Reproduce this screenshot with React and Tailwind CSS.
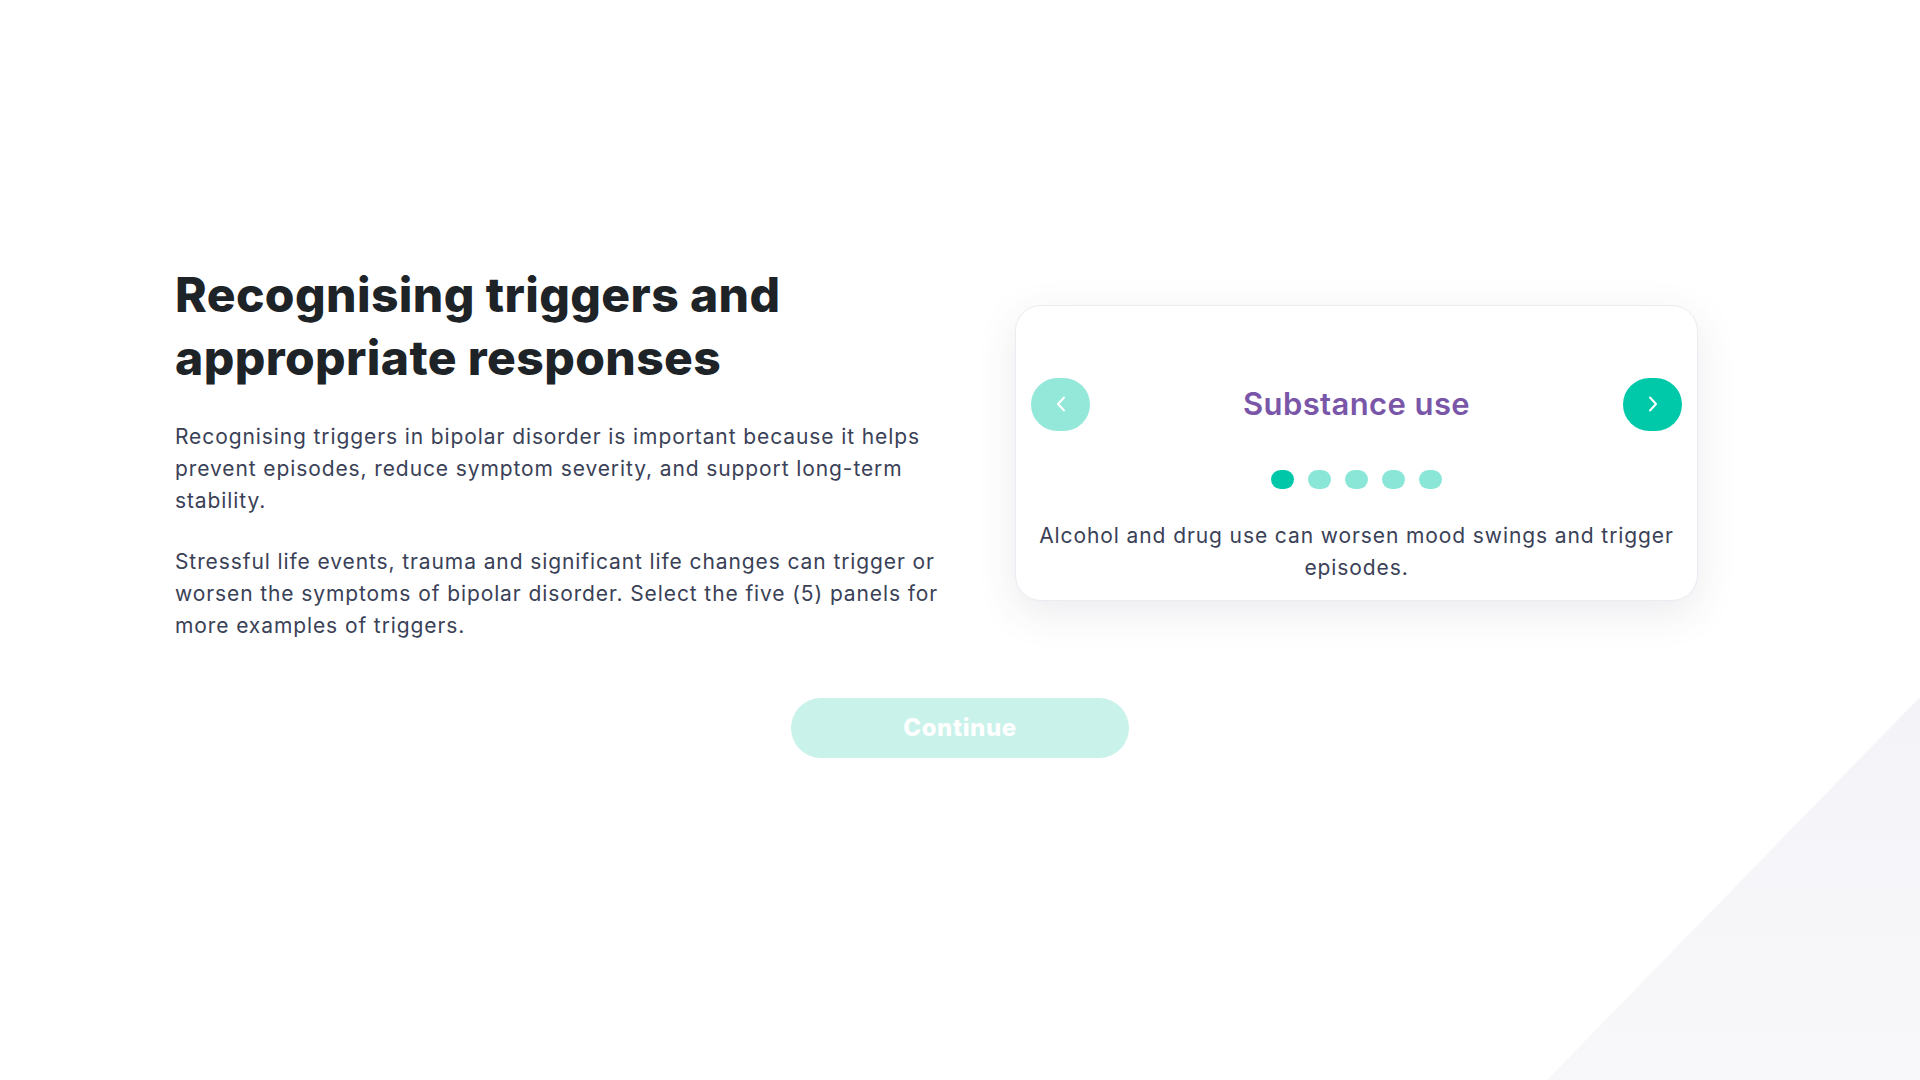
import { useState } from 'react';

const slides = [
  { title: 'Substance use', text: 'Alcohol and drug use can worsen mood swings and trigger episodes.' },
  { title: 'Sleep disruption', text: 'Changes to sleep patterns can set off manic or depressive episodes.' },
  { title: 'Stress', text: 'Ongoing pressure at work, school or home can trigger symptoms.' },
  { title: 'Medication changes', text: 'Stopping or changing medication without advice can lead to relapse.' },
  { title: 'Seasonal changes', text: 'Shifts in daylight and seasons can affect mood for some people.' },
];

const Chevron = ({ dir }) => (
  <svg width="12" height="16" viewBox="0 0 12 16" fill="none" stroke="white" strokeWidth="2" strokeLinecap="round" strokeLinejoin="round">
    {dir === 'left' ? <polyline points="9,1.5 3,8 9,14.5" /> : <polyline points="3,1.5 9,8 3,14.5" />}
  </svg>
);

export default function App() {
  const [index, setIndex] = useState(0);
  const slide = slides[index];

  return (
    <div className="relative min-h-screen w-full overflow-hidden bg-white font-['Inter',sans-serif]">
      {/* corner triangle */}
      <div className="pointer-events-none absolute bottom-0 right-0 h-[383px] w-[373px] bg-gradient-to-b from-[#f4f3f8] to-[#f8f8fa] [clip-path:polygon(100%_0,100%_100%,0_100%)]" />

      <div className="relative pt-[263px]">
        <div className="flex items-center pl-[175px]">
          <div className="w-[775px]">
            <h1 className="text-[48px] font-extrabold leading-[63px] tracking-[0.4px] text-[#1d2327]">
              Recognising triggers and
              <br />
              appropriate responses
            </h1>
            <p className="mt-[32px] text-[21px] leading-[32px] tracking-[0.9px] text-[#3a4157]">
              Recognising triggers in bipolar disorder is important because it helps prevent episodes, reduce symptom severity, and support long-term stability.
            </p>
            <p className="mt-[29px] text-[21px] leading-[32px] tracking-[0.9px] text-[#3a4157]">
              Stressful life events, trauma and significant life changes can trigger or worsen the symptoms of bipolar disorder. Select the five (5) panels for more examples of triggers.
            </p>
          </div>

          <div className="ml-[65px] flex h-[296px] w-[683px] flex-col rounded-[26px] border border-[#ebebf2] bg-white px-[15px] shadow-[0_12px_40px_rgba(60,60,90,0.10)]">
            <div className="mt-[72px] flex items-center justify-between">
              <button
                onClick={() => setIndex((index + slides.length - 1) % slides.length)}
                className="flex h-[53px] w-[59px] items-center justify-center rounded-full bg-[#93e8d9]"
              >
                <Chevron dir="left" />
              </button>
              <h2 className="text-[31px] font-semibold tracking-[0.4px] text-[#7a56a8]">{slide.title}</h2>
              <button
                onClick={() => setIndex((index + 1) % slides.length)}
                className="flex h-[53px] w-[59px] items-center justify-center rounded-full bg-[#00c9aa]"
              >
                <Chevron dir="right" />
              </button>
            </div>

            <div className="mt-[39px] flex justify-center gap-[14px]">
              {slides.map((s, i) => (
                <button
                  key={s.title}
                  onClick={() => setIndex(i)}
                  className={i === index ? 'h-[19px] w-[23px] rounded-full bg-[#00c7a7]' : 'h-[19px] w-[23px] rounded-full bg-[#8ae6d7]'}
                />
              ))}
            </div>

            <p className="mt-[31px] px-[4px] text-center text-[21px] leading-[32px] tracking-[0.9px] text-[#3a4157]">{slide.text}</p>
          </div>
        </div>

        <div className="mt-[56px] flex justify-center">
          <button className="h-[60px] w-[338px] rounded-full bg-[#c9f2ea] text-[24px] font-extrabold tracking-[0.6px] text-white">
            Continue
          </button>
        </div>
      </div>
    </div>
  );
}
